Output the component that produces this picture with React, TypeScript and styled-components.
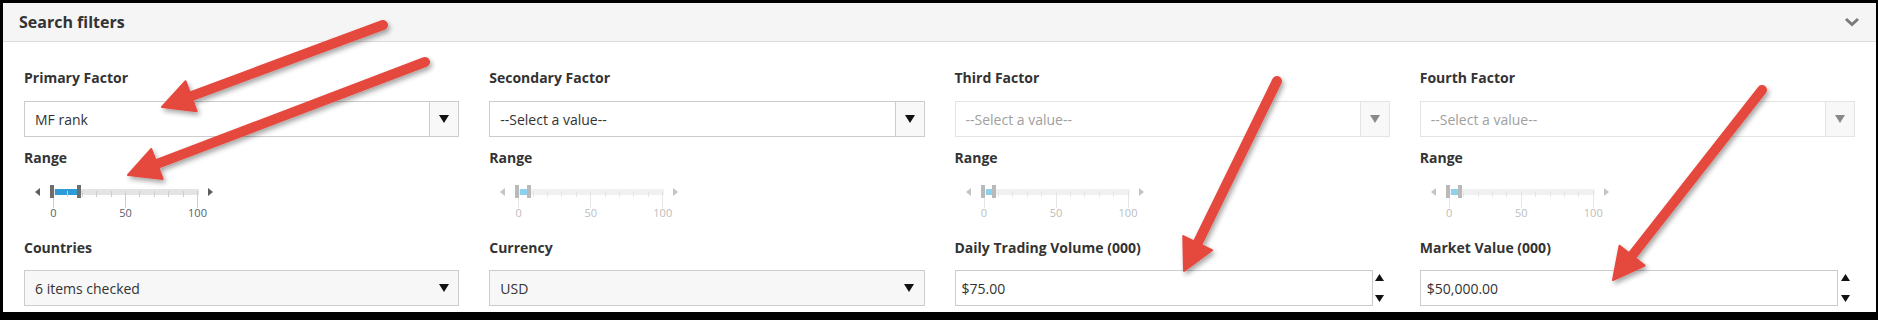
import React from "react";
import styled, { createGlobalStyle } from "styled-components";

const GlobalStyle = createGlobalStyle`
  html, body { margin: 0; padding: 0; background: #000; }
  body { font-family: "Open Sans", "Liberation Sans", sans-serif; }
  * { box-sizing: border-box; }
`;

const Page = styled.div`
  position: relative;
  width: 1878px;
  height: 320px;
  padding: 3px 2px 0 3px;
  background: #000;
  overflow: hidden;
`;

const Panel = styled.section`
  height: 309px;
  background: #fff;
  display: flex;
  flex-direction: column;
`;

const Header = styled.header`
  height: 39px;
  flex: none;
  display: flex;
  align-items: center;
  justify-content: space-between;
  padding: 0 16px;
  background: #f5f5f5;
  border-bottom: 1px solid #dcdcdc;
`;

const Title = styled.h2`
  margin: 0;
  font-size: 16px;
  font-weight: 700;
  line-height: 20px;
  color: #333;
`;

const Body = styled.div`
  flex: 1;
  display: grid;
  grid-template-columns: repeat(4, 1fr);
  column-gap: 30px;
  padding: 26px 21px 0 21px;
`;

const Column = styled.div`
  display: flex;
  flex-direction: column;
  min-width: 0;
`;

const Label = styled.label<{ $top: number; $bottom: number }>`
  display: block;
  margin: ${(p) => p.$top}px 0 ${(p) => p.$bottom}px;
  font-size: 14px;
  font-weight: 700;
  line-height: 20px;
  color: #333;
`;

const SelectBox = styled.div<{ $disabled?: boolean; $shaded?: boolean }>`
  height: 36px;
  display: flex;
  align-items: stretch;
  border: 1px solid ${(p) => (p.$disabled ? "#e4e4e4" : "#cccccc")};
  background: ${(p) => (p.$shaded ? "#f7f7f7" : "#ffffff")};
`;

const SelectValue = styled.span<{ $disabled?: boolean }>`
  flex: 1;
  display: flex;
  align-items: center;
  padding-left: 10px;
  font-size: 14px;
  color: ${(p) => (p.$disabled ? "#a0a0a0" : "#333")};
`;

const SelectButton = styled.span<{ $divided?: boolean; $disabled?: boolean }>`
  width: 29px;
  flex: none;
  display: flex;
  align-items: center;
  justify-content: center;
  border-left: ${(p) =>
    p.$divided ? `1px solid ${p.$disabled ? "#e4e4e4" : "#cccccc"}` : "none"};
  background: ${(p) => (p.$divided ? "#f8f8f8" : "transparent")};
`;

const NumberRow = styled.div`
  height: 36px;
  display: flex;
`;

const NumberInput = styled.div`
  flex: 1;
  display: flex;
  align-items: center;
  padding-left: 6px;
  border: 1px solid #cccccc;
  font-size: 14px;
  color: #333;
`;

const Spinner = styled.div`
  width: 17px;
  flex: none;
  display: flex;
  flex-direction: column;
  justify-content: space-between;
  align-items: center;
  padding: 4px 3px 4px 0;
`;

const SliderWrap = styled.div`
  height: 60px;
  padding-top: 21px;
`;

const SliderRow = styled.div`
  display: flex;
  align-items: center;
  height: 6px;
  padding-left: 11px;
`;

const Track = styled.div<{ $disabled?: boolean }>`
  position: relative;
  width: 146px;
  height: 6px;
  margin: 0 9px 0 13px;
  background: ${(p) => (p.$disabled ? "#f1f1f1" : "#e4e4e4")};
`;

const Fill = styled.div<{ $disabled?: boolean }>`
  position: absolute;
  top: 0;
  height: 6px;
  background: ${(p) => (p.$disabled ? "#8fd0ec" : "#2d9bd8")};
`;

const Handle = styled.div<{ $disabled?: boolean }>`
  position: absolute;
  top: -4px;
  width: 4px;
  height: 13px;
  background: ${(p) => (p.$disabled ? "#b9b9b9" : "#6d6d6d")};
  z-index: 2;
`;

const Tick = styled.div<{ $major?: boolean; $disabled?: boolean }>`
  position: absolute;
  top: 2px;
  width: 1px;
  height: ${(p) => (p.$major ? 17 : 6)}px;
  background: ${(p) => (p.$disabled ? "#e6e6e6" : "#cfcfcf")};
  z-index: 1;
`;

const TickLabel = styled.span<{ $disabled?: boolean }>`
  position: absolute;
  top: 17px;
  transform: translateX(-50%);
  font-size: 11px;
  line-height: 14px;
  color: ${(p) => (p.$disabled ? "#bdbdbd" : "#56606b")};
  white-space: nowrap;
`;

const Annotations = styled.svg`
  position: absolute;
  left: 0;
  top: 0;
  pointer-events: none;
`;

const ChevronDown = () => (
  <svg width="16" height="10" viewBox="0 0 16 10">
    <polyline points="2,2 8,7.5 14,2" fill="none" stroke="#7a7a7a" strokeWidth="3" />
  </svg>
);

const Tri = ({ dir, color, w = 9, h = 7 }: { dir: "up" | "down" | "left" | "right"; color: string; w?: number; h?: number }) => {
  const pts =
    dir === "down"
      ? `0,0 ${w},0 ${w / 2},${h}`
      : dir === "up"
      ? `0,${h} ${w},${h} ${w / 2},0`
      : dir === "left"
      ? `${w},0 ${w},${h} 0,${h / 2}`
      : `0,0 0,${h} ${w},${h / 2}`;
  return (
    <svg width={w} height={h} viewBox={`0 0 ${w} ${h}`} style={{ display: "block", flex: "none" }}>
      <polygon points={pts} fill={color} />
    </svg>
  );
};

const Select = ({
  value,
  disabled,
  shaded,
  divided = true,
}: {
  value: string;
  disabled?: boolean;
  shaded?: boolean;
  divided?: boolean;
}) => (
  <SelectBox $disabled={disabled} $shaded={shaded}>
    <SelectValue $disabled={disabled}>{value}</SelectValue>
    <SelectButton $divided={divided} $disabled={disabled}>
      <Tri dir="down" color={disabled ? "#8a8a8a" : "#111"} w={10} h={8} />
    </SelectButton>
  </SelectBox>
);

const NumberField = ({ value }: { value: string }) => (
  <NumberRow>
    <NumberInput>{value}</NumberInput>
    <Spinner>
      <Tri dir="up" color="#111" w={9} h={7} />
      <Tri dir="down" color="#111" w={9} h={7} />
    </Spinner>
  </NumberRow>
);

const SCALE = 144;

const RangeSlider = ({ hi, disabled }: { hi: number; disabled?: boolean }) => {
  const lo = 0;
  const loPos = (lo / 100) * SCALE;
  const hiPos = (hi / 100) * SCALE;
  const arrowColor = disabled ? "#c4c4c4" : "#5e5e5e";
  return (
    <SliderWrap>
      <SliderRow>
        <Tri dir="left" color={arrowColor} w={5} h={8} />
        <Track $disabled={disabled}>
          {Array.from({ length: 11 }, (_, i) => (
            <Tick
              key={i}
              $major={i % 5 === 0}
              $disabled={disabled}
              style={{ left: (i / 10) * SCALE }}
            />
          ))}
          <Fill $disabled={disabled} style={{ left: loPos + 2, width: hiPos - loPos - 5 }} />
          <Handle $disabled={disabled} style={{ left: loPos - 3 }} />
          <Handle $disabled={disabled} style={{ left: hiPos - 3 }} />
          {[0, 50, 100].map((v) => (
            <TickLabel key={v} $disabled={disabled} style={{ left: (v / 100) * SCALE + 0.5 }}>
              {v}
            </TickLabel>
          ))}
        </Track>
        <Tri dir="right" color={arrowColor} w={5} h={8} />
      </SliderRow>
    </SliderWrap>
  );
};

type Arrow = { t: [number, number]; p: [number, number] };

const ARROWS: Arrow[] = [
  { t: [383, 25], p: [162, 107] },
  { t: [425, 62], p: [128, 175] },
  { t: [1277, 81], p: [1184, 271] },
  { t: [1762, 90], p: [1613, 280] },
];

const RedArrow = ({ t, p }: Arrow) => {
  const dx = p[0] - t[0];
  const dy = p[1] - t[1];
  const len = Math.hypot(dx, dy);
  const ux = dx / len;
  const uy = dy / len;
  const L = 31;
  const W = 16;
  const bx = p[0] - ux * L;
  const by = p[1] - uy * L;
  const nx = -uy;
  const ny = ux;
  const wings = `${p[0]},${p[1]} ${bx + nx * W},${by + ny * W} ${bx - nx * W},${by - ny * W}`;
  return (
    <g filter="url(#arrowShadow)">
      <line
        x1={t[0]}
        y1={t[1]}
        x2={bx + ux * 4}
        y2={by + uy * 4}
        stroke="#e5483e"
        strokeWidth={10}
        strokeLinecap="round"
      />
      <polygon points={wings} fill="#e5483e" stroke="#e5483e" strokeWidth={2} strokeLinejoin="round" />
    </g>
  );
};

export default function App() {
  return (
    <>
      <GlobalStyle />
      <Page>
        <Panel>
          <Header>
            <Title>Search filters</Title>
            <ChevronDown />
          </Header>
          <Body>
            <Column>
              <Label $top={0} $bottom={13}>Primary Factor</Label>
              <Select value="MF rank" />
              <Label $top={11} $bottom={0}>Range</Label>
              <RangeSlider hi={19} />
              <Label $top={10} $bottom={12}>Countries</Label>
              <Select value="6 items checked" shaded divided={false} />
            </Column>
            <Column>
              <Label $top={0} $bottom={13}>Secondary Factor</Label>
              <Select value="--Select a value--" />
              <Label $top={11} $bottom={0}>Range</Label>
              <RangeSlider hi={8.3} disabled />
              <Label $top={10} $bottom={12}>Currency</Label>
              <Select value="USD" shaded divided={false} />
            </Column>
            <Column>
              <Label $top={0} $bottom={13}>Third Factor</Label>
              <Select value="--Select a value--" disabled />
              <Label $top={11} $bottom={0}>Range</Label>
              <RangeSlider hi={8.3} disabled />
              <Label $top={10} $bottom={12}>Daily Trading Volume (000)</Label>
              <NumberField value="$75.00" />
            </Column>
            <Column>
              <Label $top={0} $bottom={13}>Fourth Factor</Label>
              <Select value="--Select a value--" disabled />
              <Label $top={11} $bottom={0}>Range</Label>
              <RangeSlider hi={8.3} disabled />
              <Label $top={10} $bottom={12}>Market Value (000)</Label>
              <NumberField value="$50,000.00" />
            </Column>
          </Body>
        </Panel>
        <Annotations width="1878" height="320" viewBox="0 0 1878 320">
          <defs>
            <filter id="arrowShadow" x="-20%" y="-20%" width="140%" height="140%">
              <feDropShadow dx="2" dy="3" stdDeviation="2.5" floodColor="#000" floodOpacity="0.35" />
            </filter>
          </defs>
          {ARROWS.map((a, i) => (
            <RedArrow key={i} {...a} />
          ))}
        </Annotations>
      </Page>
    </>
  );
}
